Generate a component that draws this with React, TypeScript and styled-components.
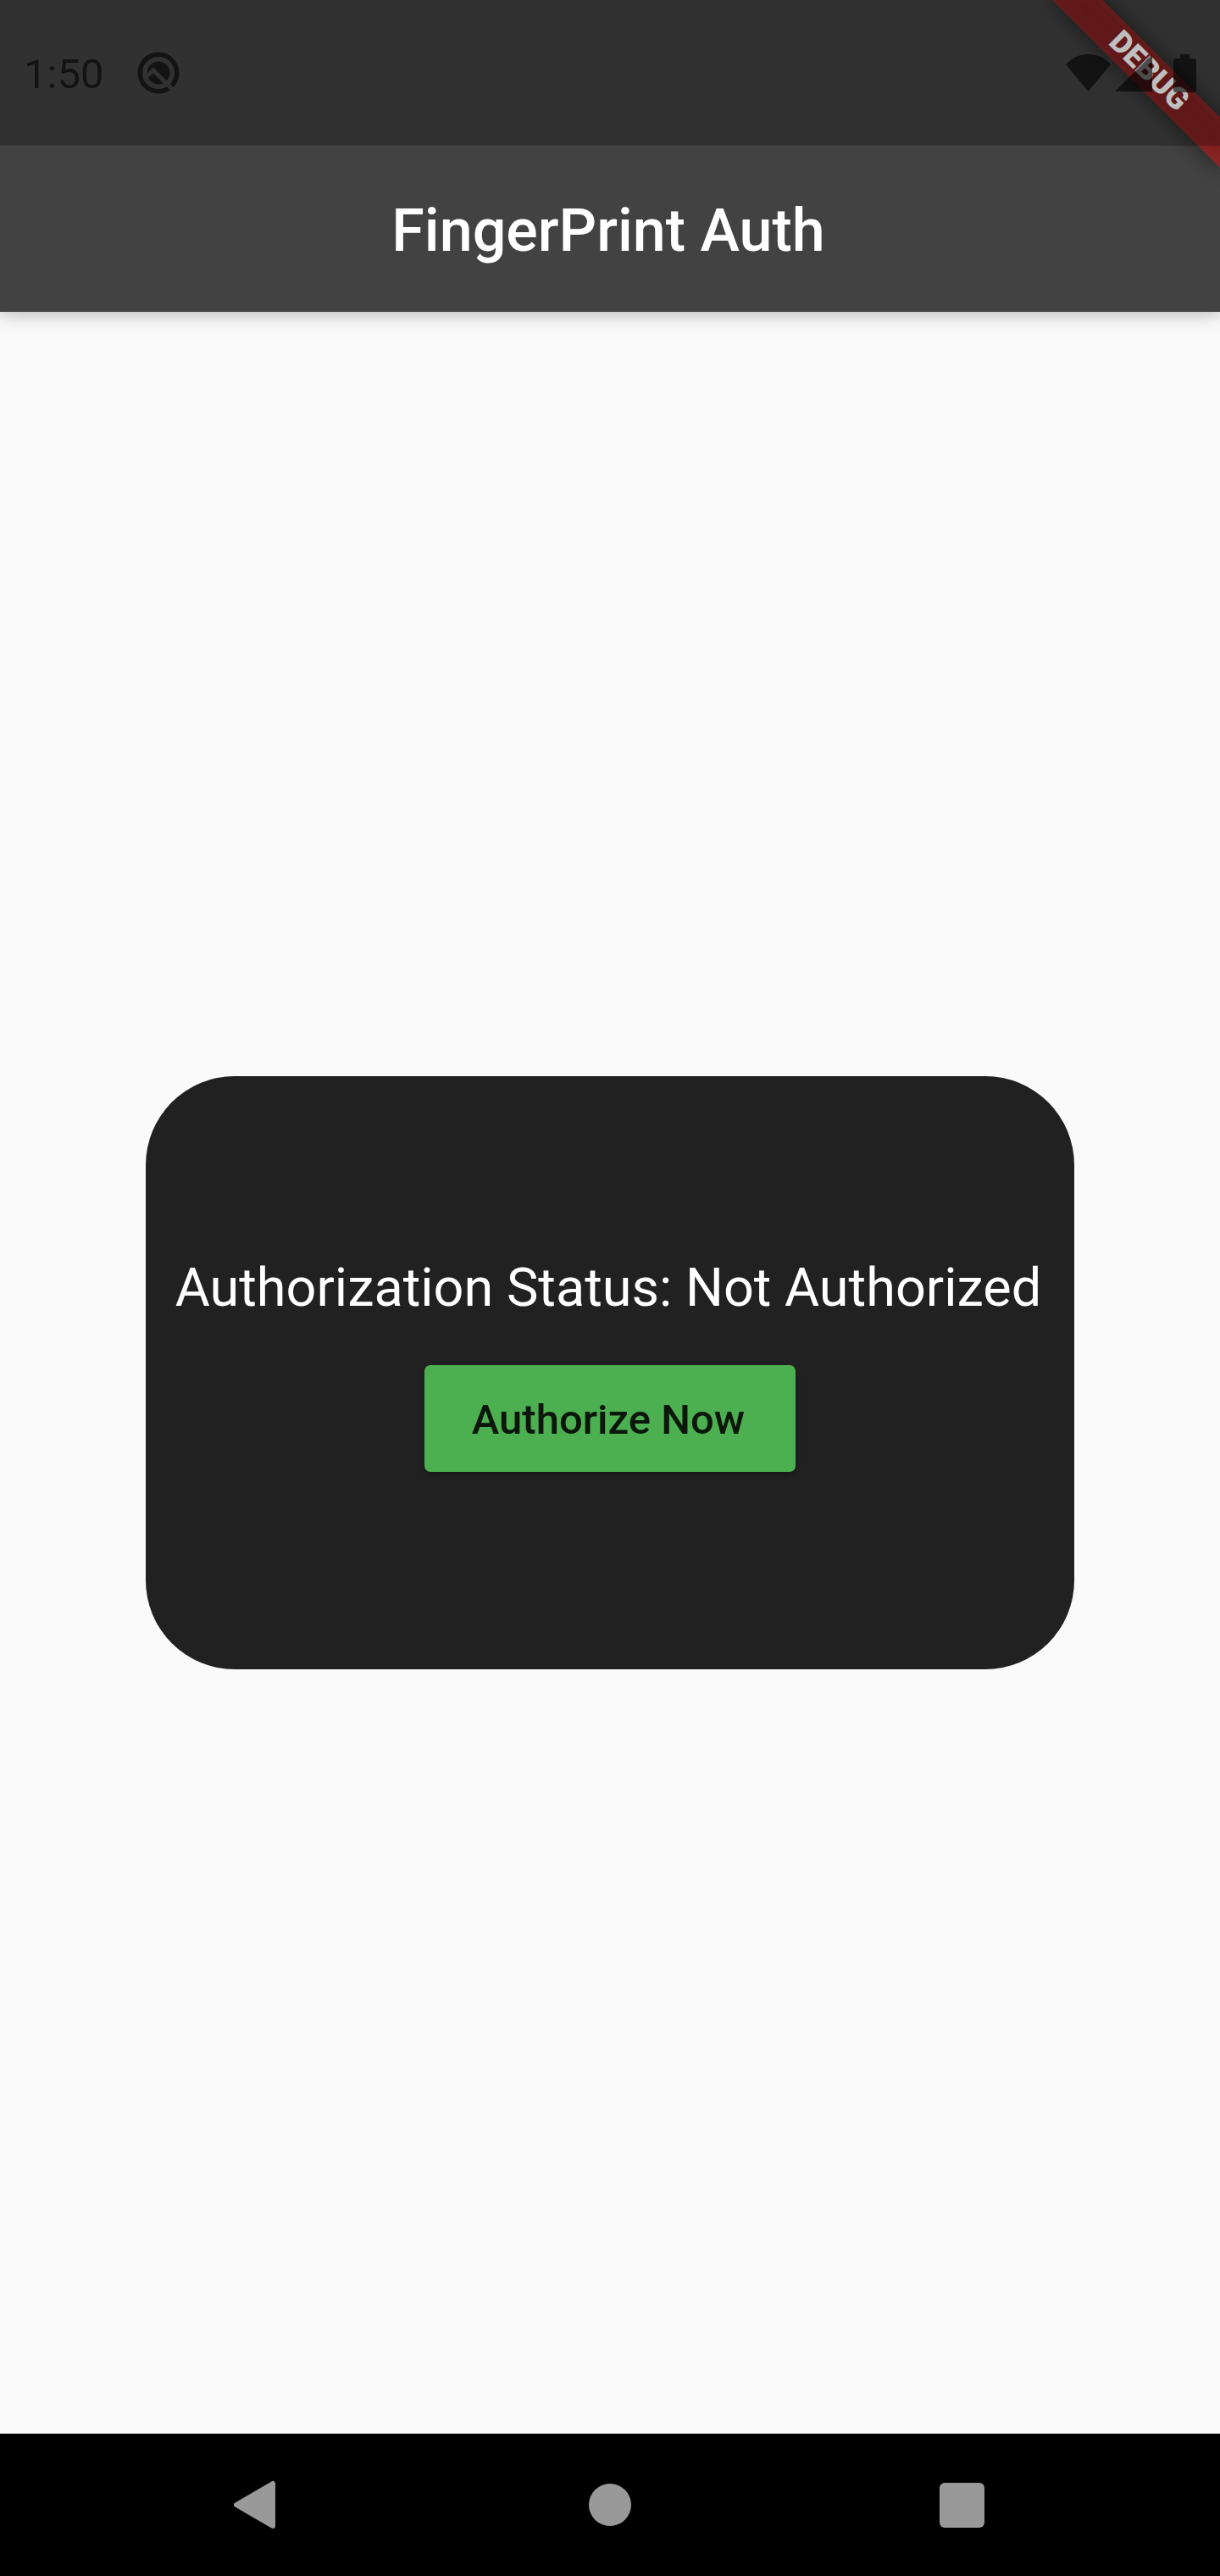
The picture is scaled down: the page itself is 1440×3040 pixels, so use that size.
import React, { useState } from "react";
import styled, { createGlobalStyle } from "styled-components";

const GlobalStyle = createGlobalStyle`
  *, *::before, *::after { box-sizing: border-box; }
  body { margin: 0; background: #fafafa; font-family: Roboto, "Liberation Sans", sans-serif; }
`;

const Screen = styled.div`
  position: relative;
  display: flex;
  flex-direction: column;
  min-height: 100vh;
  background: #fafafa;
`;

const AppBar = styled.header`
  background: #424242;
  box-shadow: 0 4px 14px rgba(0, 0, 0, 0.14), 0 4px 28px rgba(0, 0, 0, 0.12);
`;

const StatusBar = styled.div`
  position: relative;
  z-index: 2;
  display: flex;
  align-items: center;
  justify-content: space-between;
  height: 172px;
  padding: 0 28px;
  background: rgba(0, 0, 0, 0.25);
  color: rgba(0, 0, 0, 0.6);
`;

const StatusGroup = styled.div<{ $gap: number }>`
  display: flex;
  align-items: center;
  gap: ${({ $gap }) => $gap}px;
`;

const Clock = styled.time`
  padding-top: 4px;
  font-size: 49px;
  line-height: 56px;
`;

const TitleRow = styled.div`
  display: flex;
  align-items: center;
  justify-content: center;
  height: 196px;
  padding: 4px 4px 0 0;
`;

const Title = styled.h1`
  margin: 0;
  color: #fff;
  font-size: 70px;
  font-weight: 500;
  line-height: 82px;
`;

const BannerCorner = styled.div`
  position: absolute;
  top: 0;
  right: 0;
  z-index: 1;
  width: 280px;
  height: 280px;
  overflow: hidden;
  pointer-events: none;
`;

const Banner = styled.div`
  position: absolute;
  top: 98px;
  right: -140px;
  width: 280px;
  height: 42px;
  transform: rotate(45deg);
  transform-origin: 140px -98px;
  color: #fff;
  font-size: 36px;
  font-weight: 900;
  line-height: 40px;
  text-align: center;

  &::before,
  &::after {
    content: "";
    position: absolute;
    inset: 0;
    z-index: -1;
  }

  &::before {
    background: rgba(0, 0, 0, 0.5);
    filter: blur(14px);
  }

  &::after {
    background: rgba(183, 28, 28, 0.63);
  }
`;

const Body = styled.main`
  display: flex;
  flex: 1;
  align-items: center;
  justify-content: center;
`;

const Card = styled.section`
  display: flex;
  flex-direction: column;
  align-items: center;
  justify-content: center;
  gap: 52px;
  min-height: 700px;
  padding: 14px 35px 36px;
  border-radius: 105px;
  background: #212121;
`;

const StatusText = styled.p`
  margin: 0;
  padding-right: 4px;
  color: #fff;
  font-size: 63px;
  line-height: 78px;
`;

const AuthorizeButton = styled.button`
  height: 126px;
  padding: 4px 60px 0 56px;
  border: 0;
  border-radius: 7px;
  background: #4caf50;
  box-shadow: 0 4px 7px rgba(0, 0, 0, 0.3);
  color: rgba(0, 0, 0, 0.87);
  font: 500 49px/58px Roboto, "Liberation Sans", sans-serif;
  cursor: pointer;
`;

const NavBar = styled.nav`
  display: grid;
  grid-template-columns: repeat(3, 1fr);
  height: 168px;
  padding: 0 97px;
  background: #000;
`;

const NavButton = styled.button`
  display: flex;
  align-items: center;
  justify-content: center;
  padding: 0;
  border: 0;
  background: none;
  color: #999;
  cursor: pointer;
`;

function SystemIcon() {
  return (
    <svg width="50" height="50" viewBox="0 0 50 50" aria-hidden="true">
      <defs>
        <mask id="q-slash">
          <rect width="50" height="50" fill="#fff" />
          <path d="M9 31 L19 22 L46 49" fill="none" stroke="#000" strokeWidth="5" />
        </mask>
      </defs>
      <g mask="url(#q-slash)">
        <circle cx="25" cy="25" r="21.8" fill="none" stroke="currentColor" strokeWidth="5.5" />
        <circle cx="25" cy="25" r="13.5" fill="currentColor" />
      </g>
    </svg>
  );
}

function WifiIcon() {
  return (
    <svg width="53" height="44" viewBox="0 0 53 44" fill="currentColor" aria-hidden="true">
      <path d="M0 12 C7 4 16 0 26.500 0 C37 0 46 4 53 12 L26.500 44 Z" />
    </svg>
  );
}

function SignalIcon() {
  return (
    <svg width="44" height="44" viewBox="0 0 44 44" fill="currentColor" aria-hidden="true">
      <path d="M44 0 V44 H0 Z" />
    </svg>
  );
}

function BatteryIcon() {
  return (
    <svg width="27" height="45" viewBox="0 0 27 45" fill="currentColor" aria-hidden="true">
      <path d="M8 0 H19 V5 H24 Q27 5 27 8 V42 Q27 45 24 45 H3 Q0 45 0 42 V8 Q0 5 3 5 H8 Z" />
    </svg>
  );
}

function BackIcon() {
  return (
    <svg width="58" height="66" viewBox="0 0 58 66" aria-hidden="true">
      <path d="M3 33 L46 8 V58 Z" fill="currentColor" stroke="currentColor" strokeWidth="6" strokeLinejoin="round" />
    </svg>
  );
}

function HomeIcon() {
  return (
    <svg width="50" height="50" viewBox="0 0 50 50" fill="currentColor" aria-hidden="true">
      <circle cx="25" cy="25" r="25" />
    </svg>
  );
}

function RecentsIcon() {
  return (
    <svg width="53" height="53" viewBox="0 0 53 53" fill="currentColor" aria-hidden="true">
      <rect width="53" height="53" rx="6" />
    </svg>
  );
}

export default function App() {
  const [status] = useState("Not Authorized");

  return (
    <>
      <GlobalStyle />
      <Screen>
        <AppBar>
          <StatusBar>
            <StatusGroup $gap={40}>
              <Clock>1:50</Clock>
              <SystemIcon />
            </StatusGroup>
            <StatusGroup $gap={5}>
              <WifiIcon />
              <StatusGroup $gap={25}>
                <SignalIcon />
                <BatteryIcon />
              </StatusGroup>
            </StatusGroup>
          </StatusBar>
          <TitleRow>
            <Title>FingerPrint Auth</Title>
          </TitleRow>
        </AppBar>
        <BannerCorner>
          <Banner>DEBUG</Banner>
        </BannerCorner>
        <Body>
          <Card>
            <StatusText>Authorization Status: {status}</StatusText>
            <AuthorizeButton type="button">Authorize Now</AuthorizeButton>
          </Card>
        </Body>
        <NavBar>
          <NavButton type="button" aria-label="Back">
            <BackIcon />
          </NavButton>
          <NavButton type="button" aria-label="Home">
            <HomeIcon />
          </NavButton>
          <NavButton type="button" aria-label="Recent apps">
            <RecentsIcon />
          </NavButton>
        </NavBar>
      </Screen>
    </>
  );
}
